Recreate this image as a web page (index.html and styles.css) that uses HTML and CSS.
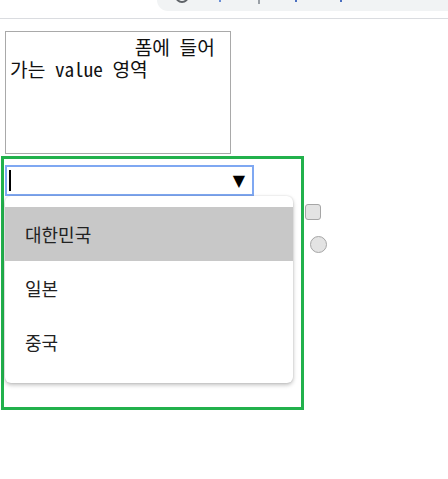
FILE: index.html
```html
<!DOCTYPE html>
<html lang="ko">
<head>
<meta charset="utf-8">
<title>select</title>
<link rel="stylesheet" href="styles.css">
</head>
<body>
<div class="chrome">
  <div class="omnibox">
    <span class="info-icon"></span>
    <span class="mark dot"></span>
    <span class="mark bar"></span>
    <span class="mark tick t1"></span>
    <span class="mark tick t2"></span>
  </div>
</div>
<main class="page">
  <textarea class="memo" rows="5">             폼에 들어 가는 value 영역</textarea>
  <div class="row">
    <div class="picker">
      <div class="select">
        <span class="caret"></span>
        <span class="arrow">▼</span>
      </div>
      <ul class="menu">
        <li class="option active">대한민국</li>
        <li class="option">일본</li>
        <li class="option">중국</li>
      </ul>
    </div>
    <div class="toggles">
      <input class="check" type="checkbox" disabled>
      <input class="radio" type="radio" disabled>
    </div>
  </div>
</main>
</body>
</html>
```
FILE: styles.css
```css
* { box-sizing: border-box; }
html, body { margin: 0; padding: 0; background: #fff; }
body { width: 448px; height: 479px; overflow: hidden; font-family: "Noto Sans CJK KR", "Noto Sans", sans-serif; }

.chrome {
  height: 19px;
  border-bottom: 1px solid #dadce0;
  display: flex;
  justify-content: flex-end;
  overflow: hidden;
}
.omnibox {
  width: 291px;
  height: 11px;
  background: #f1f3f4;
  border-bottom-left-radius: 11px;
  position: relative;
  overflow: hidden;
}
.info-icon {
  position: absolute;
  left: 18px;
  top: -11px;
  width: 14px;
  height: 14px;
  border: 2px solid #5f6368;
  border-radius: 50%;
}
.mark { position: absolute; top: 0; }
.dot { left: 62px; width: 2px; height: 2px; background: #6b8fd6; }
.bar { left: 101px; width: 2px; height: 4px; background: #9aa0a6; }
.tick { width: 2px; height: 2px; background: #4a6fc0; }
.t1 { left: 138px; }
.t2 { left: 183px; }

.page { padding: 12px 0 0 1px; }

.memo {
  display: block;
  width: 226px;
  height: 123px;
  margin: 0 0 2px 4px;
  padding: 4px 2px 2px 4px;
  border: 1px solid #a9a9a9;
  resize: none;
  overflow: hidden;
  font-family: "Noto Sans Mono CJK KR", "Liberation Mono", "Noto Sans CJK KR", monospace;
  font-size: 19.2px;
  line-height: 22px;
  color: #111;
  background: #fff;
}

.row { display: flex; align-items: flex-start; }

.picker {
  width: 303px;
  height: 254px;
  border: 3px solid #22b14c;
  padding: 6px 0 0 1px;
}
.select {
  width: 249px;
  height: 31px;
  border: 2px solid #7fa8f2;
  display: flex;
  align-items: center;
  justify-content: space-between;
  padding: 0 7px 0 2px;
}
.caret {
  width: 2px;
  height: 21px;
  background: #000;
}
.arrow {
  font: 16px "DejaVu Sans", sans-serif;
  color: #000;
  line-height: 1;
}
.menu {
  list-style: none;
  margin: 0;
  width: 288px;
  padding: 11px 0 14px;
  background: #fff;
  border-radius: 6px;
  box-shadow: 0 2px 4px rgba(0,0,0,0.25), 0 0 2px rgba(0,0,0,0.12);
  position: relative;
}
.option {
  height: 54px;
  display: flex;
  align-items: center;
  padding-left: 20px;
  font-size: 18px;
  color: #222;
}
.option.active { background: #c8c8c8; }

.toggles {
  display: flex;
  flex-direction: column;
  align-items: flex-start;
  margin: 48px 0 0 1px;
}
.check, .radio {
  appearance: none;
  -webkit-appearance: none;
  margin: 0;
  background: #e3e3e3;
  border: 1px solid #a6a6a6;
}
.check {
  width: 16px;
  height: 16px;
  border-radius: 3px;
}
.radio {
  width: 17px;
  height: 17px;
  border-radius: 50%;
  margin: 16px 0 0 5px;
}
```
